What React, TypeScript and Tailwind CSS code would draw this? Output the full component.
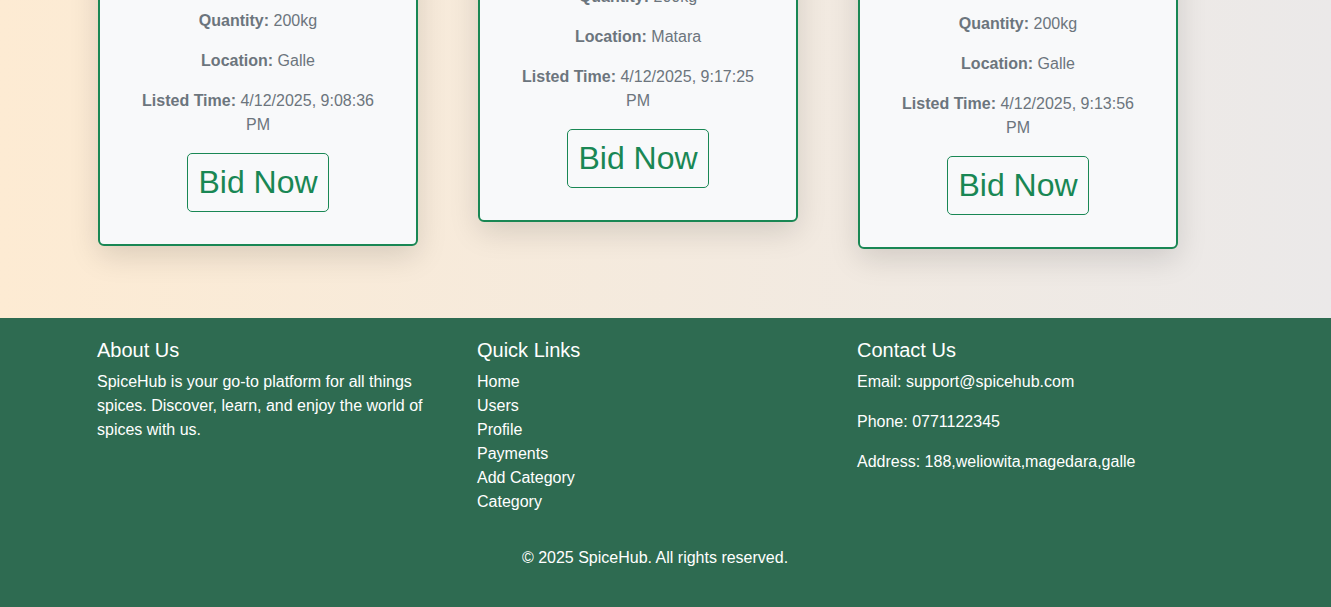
const listings = [
  {
    id: 1,
    name: "Cinnamon",
    price: "Rs. 2500",
    imgClass: "h-[112px]",
    quantity: "200kg",
    location: "Galle",
    listed: "4/12/2025, 9:08:36 PM",
  },
  {
    id: 2,
    name: "Pepper",
    price: "Rs. 1800",
    imgClass: "h-[88px]",
    quantity: "200kg",
    location: "Matara",
    listed: "4/12/2025, 9:17:25 PM",
  },
  {
    id: 3,
    name: "Cloves",
    price: "Rs. 3200",
    imgClass: "h-[115px]",
    quantity: "200kg",
    location: "Galle",
    listed: "4/12/2025, 9:13:56 PM",
  },
];

const quickLinks = ["Home", "Users", "Profile", "Payments", "Add Category", "Category"];

function ListingCard({ item }: { item: (typeof listings)[number] }) {
  return (
    <div className="ml-px w-[320px] bg-[#f8f9fa] border-2 border-[#198754] rounded-[6px] shadow-[0_10px_30px_rgba(0,0,0,0.13)] px-[30px] pt-[18px] pb-[32px] text-center text-[#6c757d]">
      {/* image + title sit above the visible area */}
      <div className={`${item.imgClass} mb-4 rounded bg-[#e9ecef]`} />
      <h5 className="text-xl leading-6 mb-4 text-[#212529]">{item.name}</h5>
      <p className="leading-6 mb-4">
        <strong>Price:</strong> {item.price}
      </p>
      <p className="leading-6 mb-4">
        <strong>Quantity:</strong> {item.quantity}
      </p>
      <p className="leading-6 mb-4">
        <strong>Location:</strong> {item.location}
      </p>
      <p className="leading-6 mb-4">
        <strong>Listed Time:</strong> {item.listed}
      </p>
      <button className="border border-[#198754] rounded-[5px] px-[10px] py-[10px] text-[32px] leading-[1.15] text-[#198754] bg-transparent">
        Bid Now
      </button>
    </div>
  );
}

export default function App() {
  return (
    <div className="h-[607px] overflow-hidden font-['Liberation_Sans',Arial,sans-serif] text-base">
      <section className="-mt-[219px] bg-linear-to-r from-[#fdebd3] to-[#ebe9e9] pb-[69px]">
        <div className="w-[1310px]">
          <div className="mx-auto w-[1140px] px-3">
            <div className="grid grid-cols-3 -mx-3 items-start">
              {listings.map((item) => (
                <div key={item.id} className="px-3">
                  <ListingCard item={item} />
                </div>
              ))}
            </div>
          </div>
        </div>
      </section>

      <footer className="bg-[#2e6b51] text-white pt-[20px] pb-[21px]">
        <div className="w-[1310px]">
          <div className="mx-auto w-[1140px] px-3">
            <div className="grid grid-cols-3 -mx-3">
              <div className="px-3">
                <h5 className="text-xl leading-6 mb-2">About Us</h5>
                <p className="leading-6 pr-2">
                  SpiceHub is your go-to platform for all things spices. Discover, learn, and enjoy the world of spices with us.
                </p>
              </div>
              <div className="px-3">
                <h5 className="text-xl leading-6 mb-2">Quick Links</h5>
                <ul className="mb-4">
                  {quickLinks.map((l) => (
                    <li key={l} className="leading-6">
                      <a href="#" className="text-white">
                        {l}
                      </a>
                    </li>
                  ))}
                </ul>
              </div>
              <div className="px-3">
                <h5 className="text-xl leading-6 mb-2">Contact Us</h5>
                <p className="leading-6 mb-4">Email: support@spicehub.com</p>
                <p className="leading-6 mb-4">Phone: 0771122345</p>
                <p className="leading-6 mb-4">Address: 188,weliowita,magedara,galle</p>
              </div>
            </div>
            <p className="text-center leading-6 mt-4 mb-4">© 2025 SpiceHub. All rights reserved.</p>
          </div>
        </div>
      </footer>
      <div className="h-px bg-[#3a302d]">
        <div className="ml-[941px] w-[127px] h-px bg-[#6e6462]" />
      </div>
    </div>
  );
}
